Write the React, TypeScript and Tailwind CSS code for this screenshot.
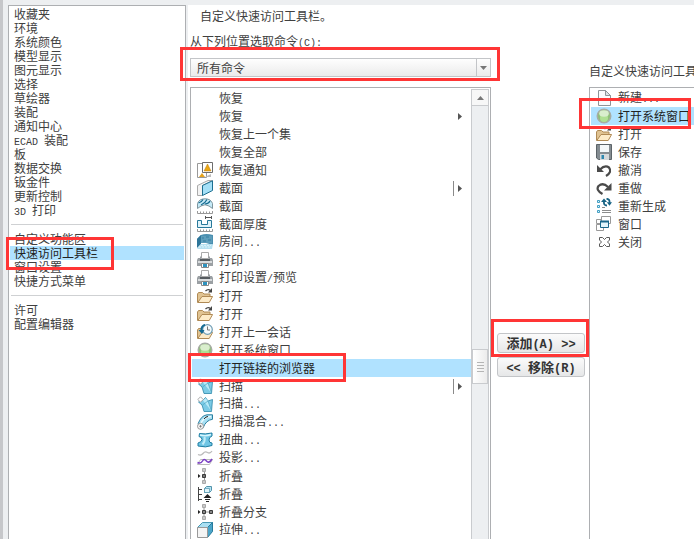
import { useState } from 'react'
import type { ReactNode } from 'react'

const navGroups = [
  ['收藏夹', '环境', '系统颜色', '模型显示', '图元显示', '选择', '草绘器', '装配', '通知中心', 'ECAD 装配', '板', '数据交换', '钣金件', '更新控制', '3D 打印'],
  ['自定义功能区', '快速访问工具栏', '窗口设置', '快捷方式菜单'],
  ['许可', '配置编辑器']
]

type Command = { label: string; icon?: string; arrow?: boolean; split?: boolean; marked?: boolean }

const commands: Command[] = [
  { label: '恢复' },
  { label: '恢复', arrow: true },
  { label: '恢复上一个集' },
  { label: '恢复全部' },
  { label: '恢复通知', icon: 'notify' },
  { label: '截面', icon: 'section', arrow: true, split: true },
  { label: '截面', icon: 'sectionRuler' },
  { label: '截面厚度', icon: 'thickness' },
  { label: '房间...', icon: 'room' },
  { label: '打印', icon: 'print' },
  { label: '打印设置/预览', icon: 'print' },
  { label: '打开', icon: 'open' },
  { label: '打开', icon: 'open' },
  { label: '打开上一会话', icon: 'session' },
  { label: '打开系统窗口', icon: 'orb' },
  { label: '打开链接的浏览器', marked: true },
  { label: '扫描', icon: 'sweep', arrow: true, split: true },
  { label: '扫描...', icon: 'sweep' },
  { label: '扫描混合...', icon: 'blend' },
  { label: '扭曲...', icon: 'warp' },
  { label: '投影...', icon: 'project' },
  { label: '折叠', icon: 'fold' },
  { label: '折叠', icon: 'foldTree' },
  { label: '折叠分支', icon: 'foldBranch' },
  { label: '拉伸...', icon: 'extrude' }
]

const toolbar: Command[] = [
  { label: '新建...', icon: 'page' },
  { label: '打开系统窗口', icon: 'orb', marked: true },
  { label: '打开', icon: 'open' },
  { label: '保存', icon: 'save' },
  { label: '撤消', icon: 'undo' },
  { label: '重做', icon: 'redo' },
  { label: '重新生成', icon: 'regen' },
  { label: '窗口', icon: 'windows' },
  { label: '关闭', icon: 'close' }
]

const ruler = <path d="M.5 13v2.5h15V13M3.5 13.5v2M6.5 13.5v2M9.5 13.5v2M12.5 13.5v2" fill="none" stroke="#999" />

const folder = (
  <>
    <path d="M.5 14.5V6l1-1.500h4L7 6h6v2" fill="#e0c392" stroke="#b08a55" />
    <path d="M.8 14.500 5 8.500h10.600l-3.400 6z" fill="#fdebc8" stroke="#b08a55" />
  </>
)

const icons: Record<string, ReactNode> = {
  notify: (
    <>
      <path d="M.5 1.500h9v14h-9z" fill="#fff" stroke="#999" />
      <path d="m2 15 3-4 3 4z" fill="#e5a21c" />
      <path d="m8 15 6-3v3z" fill="#bbb" />
      <path d="M5.500.5h10v10h-10z" fill="#fff" stroke="#6d6d6d" />
      <path d="M10.500 2 14 9H7z" fill="#eba713" stroke="#b97b08" strokeWidth=".5" />
    </>
  ),
  section: (
    <>
      <path d="M.5 5.500 11 .5h4.500L5.500 5.500v10h-5z" fill="#f3f3f3" stroke="#aaa" />
      <path d="M5.500 5.500 15.500.8v9.700l-10 5z" fill="#a5e0f7" stroke="#1d6f90" />
    </>
  ),
  sectionRuler: (
    <>
      <path d="M.5 10.500v-5Q2 .8 8 .8t7.500 4.700v5L12 8Q8 5.500 4 8z" fill="#c5eaf7" stroke="#7f959e" />
      <path d="M1.500 5q3-.5 4.500-3.500M4 7Q8 5.500 10 1.500M8 6q4-.5 5-3" fill="none" stroke="#156a90" strokeWidth="1.200" />
      {ruler}
    </>
  ),
  thickness: (
    <>
      <path d="M.5 4.500h4v4h6v-4h4v7H.5z" fill="#dff3fa" stroke="#27789a" />
      <path d="M8.500 0v3M14.500 0v3M9 1.500h5" stroke="#555" />
      {ruler}
    </>
  ),
  room: (
    <>
      <path d="M0 5 4 1q5-2 12 0v10L9 9z" fill="#4a8fb0" />
      <path d="M0 5 4 1v9l-4 4z" fill="#2d7599" />
      <path d="M4 2h11v7H4z" fill="#5d9dba" />
      <path d="m0 15 4-5h12l-1 5z" fill="#b6e0f0" />
      <path d="M2 13h12M4 11.500h10" stroke="#d9f2fa" strokeDasharray="2 1" />
      <path d="M5 4h2m2-1h3M6 7h3m2-1h3" stroke="#357fa1" />
    </>
  ),
  print: (
    <>
      <path d="M4.500.5h7v6h-7z" fill="#fff" stroke="#aaa" />
      <path d="M1 6h2V4.500h1.500V7h7V4.500H13V6h2l1 2v6H0V8z" fill="#9ba0a4" />
      <path d="M1 9h14v2H1z" fill="#d9dcde" />
      <path d="M3 7h10v2H3z" fill="#565b5f" />
      <path d="M4.500 11.500h7v4h-7z" fill="#fff" stroke="#888" />
      <path d="M6 12h4v3H6z" fill="#2e93bf" />
    </>
  ),
  open: (
    <>
      {folder}
      <path d="M8.500 3Q11 .5 13.500 2.500" fill="none" stroke="#444" strokeWidth="1.300" />
      <path d="M15 0v4.500h-4z" fill="#444" />
    </>
  ),
  session: (
    <>
      {folder}
      <circle cx="10.500" cy="5.500" r="4.800" fill="#f4fafc" stroke="#6d9bb3" strokeWidth="1.200" />
      <path d="M10.500 2.500v3.500H13" fill="none" stroke="#777" />
      <path d="M8 .8Q4 2 4.500 7" fill="none" stroke="#146b94" strokeWidth="2" />
      <path d="M1.500 6h6L5 10z" fill="#146b94" />
    </>
  ),
  orb: (
    <>
      <circle cx="8" cy="8" r="6.800" fill="#90c07a" stroke="#a7aca5" strokeWidth="1.400" />
      <circle cx="8" cy="10" r="4" fill="#afe093" />
      <ellipse cx="8" cy="5.500" rx="4.800" ry="3.200" fill="#d9eecd" />
    </>
  ),
  sweep: (
    <>
      <path d="m5 5 3.500-3.500L11 5l4.500-1.500-1 12H7L5 9 1.500 6z" fill="#7ccbe6" stroke="#2c86a8" strokeWidth=".8" />
      <path d="M6 4.500 8.500 2 11 5l3.500 10z" fill="#b9eaf8" />
      <path d="m5.500 9 5.500-4 3.500 10" fill="none" stroke="#4ba3c0" strokeWidth=".7" />
      <path d="M3.500.8 6.200 3.500 3.500 6.200.8 3.500z" fill="#fff" stroke="#aaa" />
    </>
  ),
  blend: (
    <>
      <path d="M1 10Q4 1.500 10 .8h5.500v4.500Q9 6 6 14z" fill="#a7dff2" stroke="#2b80a1" />
      <path d="M4 9Q7 3 14 2.500" fill="none" stroke="#e8fafe" strokeWidth="1.500" />
      <path d="M7 5q2-2.500 4-2.500" fill="none" stroke="#222" />
      <circle cx="3.500" cy="12.300" r="3" fill="#f6f6f6" stroke="#999" />
      <path d="M3.500 11v2.600M2.200 12.300h2.600" stroke="#666" strokeWidth=".7" />
    </>
  ),
  warp: (
    <>
      <path d="M2.500 1.500Q8 2.500 15 1v3q-3 1-3 4t3 3v2.500Q9 16 1 14v-3q4-1 4-3.500T2 4.500z" fill="#6fc5e4" stroke="#1f7ea3" />
      <path d="M3 3q6 1.500 11-.5" fill="none" stroke="#d7f5fd" strokeWidth="1.500" />
      <path d="M7.500 5q1 4-2 7.500" fill="none" stroke="#c0ecf8" strokeWidth="2" />
    </>
  ),
  project: (
    <>
      <path d="M1 4.500Q4 6 6 3.500t4.500-1T15 1" fill="none" stroke="#bbb" strokeWidth="1.300" />
      <path d="m.5 14.500 3-5h12l-3 5z" fill="#fff" stroke="#bbb" />
      <path d="M.5 12.500Q4 14 5.500 11t4 0 5.500-2" fill="none" stroke="#7b3fc4" strokeWidth="1.500" />
    </>
  ),
  fold: (
    <>
      <path d="M7.500 3v10" stroke="#999" />
      <path d="M5.500.5h3v3h-3zM5.500 12.500h3v3h-3z" fill="#c9c9c9" stroke="#aaa" />
      <path d="M5.500 6.500h3v3h-3z" fill="#777" stroke="#3a3a3a" />
      <path d="m1 6 2.500 2L1 10z" fill="#222" />
    </>
  ),
  foldTree: (
    <>
      <path d="M1.500 1v14M1.500 3.500H5M1.500 8.500H5M1.500 13.500H5" stroke="#444" />
      <path d="m7.500 2.500 2-2h5v4l-2 2h-5z" fill="#b4e3f4" stroke="#5293aa" />
      <path d="M7.500 2.500h5v4h-5z" fill="#dff4fa" stroke="#5293aa" strokeWidth=".7" />
      <path d="m10.500 8 4 4h-8z" fill="#222" />
      <path d="M8 13.500h5M9 15.500h3" stroke="#222" />
    </>
  ),
  foldBranch: (
    <>
      <path d="M7 3v10M7 8h6" stroke="#999" />
      <path d="M5.500.5h3v3h-3zM5.500 12.500h3v3h-3z" fill="#c9c9c9" stroke="#aaa" />
      <path d="M5.500 6.500h3v3h-3zM12.500 6.500h3v3h-3z" fill="#888" stroke="#3a3a3a" />
      <path d="m1 6 2.500 2L1 10z" fill="#222" />
    </>
  ),
  extrude: (
    <>
      <path d="m.5 5.500 5-5h10l-5 5z" fill="#a9dff2" stroke="#4797b3" />
      <path d="m10.500 5.500 5-5v9l-5 6z" fill="#4ba5c9" stroke="#277a9c" />
      <path d="M.5 5.500h10v10H.5z" fill="#f4f4f4" stroke="#999" />
    </>
  ),
  page: (
    <>
      <path d="M2.500.5h7l5 5v10h-12z" fill="#fafbfc" stroke="#8e9498" />
      <path d="M9.500.5v5h5z" fill="#dde3e6" stroke="#8e9498" />
    </>
  ),
  save: (
    <>
      <path d="M.5.5h15v15h-13l-2-1.500z" fill="#848c91" stroke="#5c6469" />
      <path d="M4 1h9v7H4z" fill="#f4f8fa" />
      <path d="M4 10h9v6H4z" fill="#d5d9db" />
      <path d="M5.500 11H8v4H5.500z" fill="#2e87ae" />
    </>
  ),
  undo: (
    <>
      <path d="M4 7.500Q9 2.500 13 5.500q3.500 4.500-3 8.500" fill="none" stroke="#4a4a4a" strokeWidth="2.200" />
      <path d="M1 3v7h7z" fill="#4a4a4a" />
    </>
  ),
  redo: (
    <>
      <path d="M6.500 14Q-.5 10 2.500 6 7 2 12 7" fill="none" stroke="#4a4a4a" strokeWidth="2.200" />
      <path d="M15.500 3v7.500H8z" fill="#4a4a4a" />
    </>
  ),
  regen: (
    <>
      <path d="M1.500 2.500h2v2h-2zM1.500 7.500h2v2h-2zM1.500 12.500h2v2h-2z" fill="#e6f6fc" stroke="#3f9dc2" />
      <path d="M6 9.500h3M6 12.500h9M6 14.500h9" stroke="#8c8c8c" />
      <path d="M11 7.500Q7.500 7.500 8 3.500M10.500.8q3.500.2 3 4" fill="none" stroke="#176384" strokeWidth="1.800" />
      <path d="M8 .5 11 4H5zM13.500 7.800 10.800 4.300h5.200z" fill="#176384" />
    </>
  ),
  windows: (
    <>
      <path d="M5.500.5h9v7h-9zM.5 8.500h7v6h-7zM.5 3.500h5v4h-5z" fill="#fff" stroke="#999" />
      <path d="M4.500 5.500h8v6h-8z" fill="#e0f4fb" stroke="#17668a" />
      <path d="M4 5.500h9" stroke="#17668a" strokeWidth="2" />
    </>
  ),
  close: (
    <path d="M3.500 3.500h3l2 2 2-2h3V6l-2 2 2 2v2.500h-3l-2-2-2 2h-3V10l2-2-2-2z" fill="#fff" stroke="#5a5a5a" />
  )
}

function Icon({ name }: { name?: string }) {
  return (
    <svg viewBox="0 0 16 16" aria-hidden="true" className="size-4 shrink-0">
      {name && icons[name]}
    </svg>
  )
}

// Half-width characters take a fixed pitch beside the full-width ones
function Label({ text, bold = false }: { text: string; bold?: boolean }) {
  return (
    <span className="whitespace-pre">
      {text.split(/([\x20-\x7e]+)/).filter(Boolean).map((part, i) =>
        /^[\x20-\x7e]/.test(part) ? (
          <span key={i} className={bold ? "font-['Liberation_Mono',monospace] text-[12px]" : "font-['Liberation_Mono',monospace] text-[10px]"}>
            {part}
          </span>
        ) : (
          part
        )
      )}
    </span>
  )
}

function Marker({ className }: { className: string }) {
  return <span aria-hidden="true" className={`pointer-events-none absolute z-10 border-3 border-[#ff3535] ${className}`} />
}

function CommandRow({ item, active, onSelect, marker }: { item: Command; active: boolean; onSelect: () => void; marker: string }) {
  return (
    <li>
      <button
        type="button"
        onClick={onSelect}
        className={`relative flex h-[18px] w-full items-center gap-1.5 pr-[9px] pl-[5px] text-left ${active ? 'bg-[#b0e2ff] text-[#222]' : ''}`}
      >
        <Icon name={item.icon} />
        <Label text={item.label} />
        {item.arrow && (
          <span className="ml-auto flex items-center gap-1">
            {item.split && <span className="h-[15px] w-px bg-[#8a8a8a]" />}
            <svg viewBox="0 0 4 7" aria-hidden="true" className="h-[7px] w-1">
              <path d="M0 0 4 3.500 0 7z" fill="#555" />
            </svg>
          </span>
        )}
        {item.marked && <Marker className={marker} />}
      </button>
    </li>
  )
}

export default function App() {
  const [page, setPage] = useState('快速访问工具栏')
  const [command, setCommand] = useState(15)
  const [tool, setTool] = useState(1)

  const pushButton = 'relative h-5 w-full rounded-[3px] border border-[#c3c5c8] bg-gradient-to-b from-[#fbfbfb] to-[#e6e7e8] text-[13px] leading-[18px] font-bold text-[#333]'

  return (
    <div className="flex h-screen overflow-hidden border-l-3 border-[#c6c7ca] bg-[#edeff1] pt-[5px] pl-[5px] font-['Noto_Sans_CJK_SC',sans-serif] text-[12px] leading-[18px] text-[#404040]">
      <nav className="w-[178px] shrink-0 border border-b-0 border-[#adafb2] bg-white px-px pt-px leading-[14px]">
        {navGroups.map((group, i) => (
          <div key={i}>
            {i > 0 && <hr className="mx-px mt-[7px] mb-[7px] border-[#cfd1d3]" />}
            <ul>
              {group.map(label => (
                <li key={label}>
                  <button
                    type="button"
                    onClick={() => setPage(label)}
                    className={`relative block h-[14px] w-full pl-1 text-left ${page === label ? 'bg-[#b0e2ff] text-[#222]' : ''}`}
                  >
                    <Label text={label} />
                    {label === '快速访问工具栏' && <Marker className="-top-[9px] -left-1 h-[33px] w-[108px]" />}
                  </button>
                </li>
              ))}
            </ul>
          </div>
        ))}
      </nav>

      <main className="ml-0.5 flex min-w-0 flex-1 bg-white pl-0.5">
        <section className="flex min-w-0 flex-1 flex-col">
          <h1 className="pl-2.5 leading-[22px]">自定义快速访问工具栏。</h1>
          <label htmlFor="source" className="mt-[5px] h-[18px]">
            <Label text="从下列位置选取命令(C):" />
          </label>
          <div className="relative mt-2">
            <select
              id="source"
              className="block h-[19px] w-full appearance-none border border-[#c3c5c8] bg-gradient-to-b from-[#fefefe] to-[#ebebeb] pr-4 pl-1.5 leading-[17px]"
            >
              <option>所有命令</option>
            </select>
            <span className="pointer-events-none absolute inset-y-0 right-0 flex w-[15px] items-center justify-center border border-[#c3c5c8]">
              <svg viewBox="0 0 7 4" aria-hidden="true" className="h-1 w-[7px]">
                <path d="M0 0h7L3.500 4z" fill="#777" />
              </svg>
            </span>
            <Marker className="-top-[11px] -right-[9px] -bottom-1 -left-2.5" />
          </div>

          <div className="mt-2.5 flex flex-1 border border-b-0 border-[#adafb2] px-px pt-px">
            <ul className="min-w-0 flex-1">
              {commands.map((item, i) => (
                <CommandRow
                  key={i}
                  item={item}
                  active={command === i}
                  onSelect={() => setCommand(i)}
                  marker="-top-1.5 -left-1 h-[29px] w-[158px]"
                />
              ))}
            </ul>
            <div className="flex w-[18px] flex-col border-x border-[#c9cbce] bg-[#edeff1]">
              <button type="button" aria-label="向上滚动" className="flex h-[17px] shrink-0 items-center justify-center border-y border-[#c9cbce] bg-[#f7f7f7]">
                <svg viewBox="0 0 7 4" aria-hidden="true" className="h-1 w-[7px]">
                  <path d="M0 4h7L3.500 0z" fill="#777" />
                </svg>
              </button>
              <div className="grow-[243]" />
              <div className="flex h-[35px] flex-col items-center justify-center gap-0.5 border border-[#c9cbce] bg-gradient-to-r from-white to-[#ececec]">
                <span className="h-px w-[7px] bg-[#b5b5b5]" />
                <span className="h-px w-[7px] bg-[#b5b5b5]" />
                <span className="h-px w-[7px] bg-[#b5b5b5]" />
                <span className="h-px w-[7px] bg-[#b5b5b5]" />
              </div>
              <div className="grow-[155]" />
            </div>
          </div>
        </section>

        <div className="flex w-[98px] shrink-0 flex-col gap-1 pt-[328px] pr-1 pl-1.5">
          <button type="button" className={pushButton}>
            <Label text="添加(A) >>" bold />
            <Marker className="-top-[15px] -right-[5px] -bottom-[5px] -left-[7px]" />
          </button>
          <button type="button" className={pushButton}>
            <Label text="<< 移除(R)" bold />
          </button>
        </div>

        <section className="flex w-[105px] shrink-0 flex-col pt-[57px]">
          <h2 className="whitespace-nowrap">自定义快速访问工具</h2>
          <ul className="mt-[7px] flex-1 border-t border-l border-[#adafb2] pt-px pl-px whitespace-nowrap">
            {toolbar.map((item, i) => (
              <CommandRow
                key={i}
                item={item}
                active={tool === i}
                onSelect={() => setTool(i)}
                marker="-top-[9px] -left-3 h-[31px] w-[112px]"
              />
            ))}
          </ul>
        </section>
      </main>
    </div>
  )
}
